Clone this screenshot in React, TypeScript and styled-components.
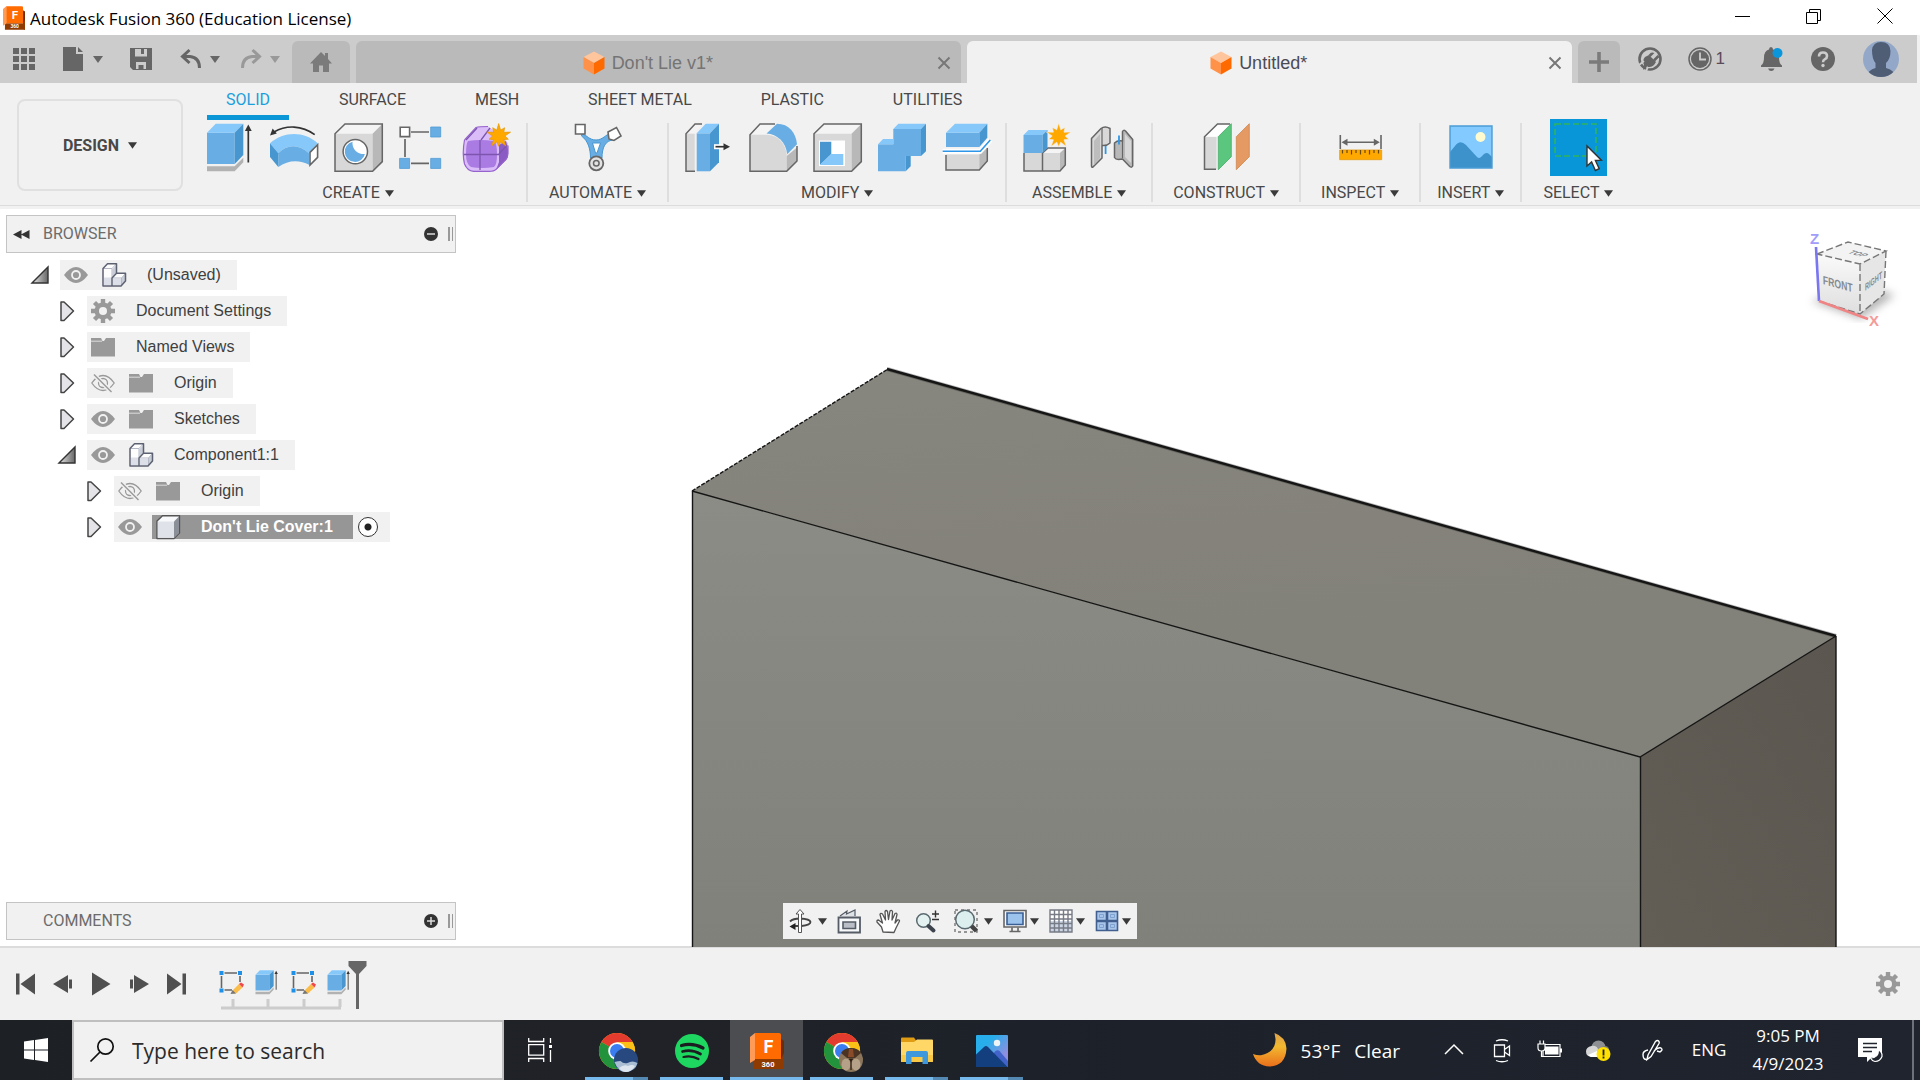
import React from "react";
import styled, { createGlobalStyle, css } from "styled-components";

const ui = `"Liberation Sans", Arial, sans-serif`;
const ribbonFont = `Roboto, "Liberation Sans", sans-serif`;
const system = `"Open Sans", "Noto Sans", sans-serif`;

const Global = createGlobalStyle`
  *, *::before, *::after { box-sizing: border-box; }
  body { margin: 0; overflow: hidden; background: #fff; font-family: ${ui}; }
  button { font: inherit; color: inherit; background: none; border: 0; padding: 0; margin: 0; }
  svg { display: block; overflow: visible; flex: none; }
`;

const Shell_ = styled.div`
  display: flex;
  flex-direction: column;
  height: 100vh;
`;

const Button = styled.button`
  display: flex;
  align-items: center;
  justify-content: center;
`;

/* ---------- title bar ---------- */
const TitleBar = styled.header`
  display: flex;
  align-items: center;
  height: 35px;
  padding-left: 3px;
  background: #fff;
  flex: none;
`;
const Title = styled.h1`
  flex: 1;
  margin: 2px 0 0 5px;
  font: 400 17px/24px ${system};
  color: #000;
`;
const WindowButton = styled(Button)`
  width: 71px;
  height: 32px;
  align-self: flex-start;
`;

/* ---------- application bar ---------- */
const AppBar = styled.nav`
  display: flex;
  align-items: center;
  height: 48px;
  margin-right: 3px;
  background: #ccc;
  flex: none;
`;
const AppBarShell = styled.div`
  background: #f1f1f1;
  flex: none;
`;
const QuickTools = styled.div`
  display: flex;
  gap: 26px;
  padding: 0 12px;
`;
const QuickPair = styled.div<{ $gap: number }>`
  display: flex;
  align-items: center;
  gap: ${(p) => p.$gap}px;
`;
const DocTabs = styled.div`
  display: flex;
  align-items: flex-end;
  align-self: stretch;
  flex: 1;
  gap: 6px;
`;
const tabShape = css`
  height: 42px;
  border-radius: 6px 6px 0 0;
`;
const SmallTab = styled(Button)<{ $w: number }>`
  ${tabShape}
  width: ${(p) => p.$w}px;
  background: #bababa;
  flex: none;
`;
const DocTab = styled.div<{ $active?: boolean }>`
  ${tabShape}
  display: flex;
  align-items: center;
  flex: 1;
  padding: 2px 6px 0;
  background: ${(p) => (p.$active ? "#f1f1f1" : "#bababa")};
  color: ${(p) => (p.$active ? "#4b4b55" : "#747474")};
`;
const DocName = styled(Button)`
  flex: 1;
  gap: 6px;
  font-size: 18px;
  line-height: 24px;
`;
const CloseButton = styled(Button)`
  width: 22px;
  height: 22px;
`;
const Account = styled.div`
  display: flex;
  align-items: center;
  gap: 26px;
  padding: 0 18px;
`;
const Profile = styled(Button)`
  margin-left: 2px;
`;
const JobStatus = styled(Button)`
  gap: 4px;
  font-size: 17px;
  color: #5a4a5a;
`;

/* ---------- ribbon ---------- */
const Ribbon = styled.section`
  display: flex;
  gap: 5px;
  height: 126px;
  padding-left: 17px;
  background: linear-gradient(#f1f1f1 122px, #dcdcdc 122px, #dcdcdc 123px, #f1f1f1 123px);
  color: #484848;
  font-family: ${ribbonFont};
  font-size: 16px;
  flex: none;
`;
const Workspace = styled(Button)`
  gap: 9px;
  width: 166px;
  height: 92px;
  margin-top: 16px;
  border: 2px solid #e0e0e0;
  border-radius: 8px;
  font-weight: 700;
`;
const RibbonMain = styled.div`
  flex: 1;
`;
const RibbonTabs = styled.div`
  display: flex;
  gap: 31px;
  padding-left: 19px;
`;
const RibbonTab = styled(Button)<{ $active?: boolean }>`
  height: 37px;
  padding: 0 19px;
  border-bottom: 5px solid ${(p) => (p.$active ? "#0b96d8" : "transparent")};
  color: ${(p) => (p.$active ? "#1b9edc" : "#484848")};
`;
const Groups = styled.div`
  display: flex;
  height: 79px;
  margin-top: 3px;
  padding-left: 2px;
`;
const Group = styled.div<{ $pad: number }>`
  display: flex;
  flex-direction: column;
  align-items: center;
  justify-content: space-between;
  padding: 0 ${(p) => p.$pad}px;
  border-right: 2px solid #dedede;
  &:last-child { border-right: 0; }
`;
const ToolRow = styled.div`
  display: flex;
  gap: 16px;
`;
const Tool = styled(Button)<{ $on?: boolean }>`
  width: 48px;
  height: 48px;
  ${(p) => p.$on && css`
    width: 57px;
    height: 57px;
    margin: -4px 0;
    background: #0996d8;
  `}
`;
const GroupLabel = styled(Button)`
  gap: 5px;
  line-height: 18px;
`;

/* ---------- canvas ---------- */
const Canvas = styled.main`
  position: relative;
  display: flex;
  flex-direction: column;
  justify-content: space-between;
  flex: 1;
  min-height: 0;
  padding: 6px;
  background: #fff;
`;
const Model = styled.svg`
  position: absolute;
  inset: 0;
  width: 100%;
  height: 100%;
`;
const CubeOverlay = styled.svg`
  position: absolute;
  top: 20px;
  right: 19px;
`;
const NavBar = styled.div`
  position: absolute;
  left: 50%;
  bottom: 7px;
  transform: translateX(-50%);
  display: flex;
  align-items: center;
  gap: 10px;
  height: 36px;
  padding: 0 6px 0 5px;
  background: #f1f1f1;
`;
const NavPair = styled.div<{ $gap?: number }>`
  display: flex;
  align-items: center;
  gap: ${(p) => p.$gap ?? 0}px;
  padding-right: ${(p) => (p.$gap ? 0 : 5)}px;
`;
const Side = styled.aside`
  position: relative;
  width: 450px;
`;
const Panel = styled.div`
  display: flex;
  align-items: center;
  height: 38px;
  padding: 0 2px 0 6px;
  border: 1px solid #c4c4c4;
  background: #f1f1f1;
`;
const PanelTitle = styled.h2`
  flex: 1;
  margin: 0 0 0 12px;
  font: 400 16px/20px ${ribbonFont};
  color: #6c6c6c;
`;
const Grip = styled.i`
  width: 5px;
  height: 14px;
  margin-left: 10px;
  border-left: 2px solid #999;
  border-right: 1px solid #999;
`;
const Tree = styled.ul`
  display: flex;
  flex-direction: column;
  gap: 6px;
  margin: 0;
  padding: 7px 0 0 24px;
  list-style: none;
`;
const TreeRow = styled.li<{ $depth: number }>`
  display: flex;
  align-items: center;
  height: 30px;
  padding-left: ${(p) => p.$depth * 27}px;
`;
const Expander = styled(Button)`
  width: 20px;
  height: 24px;
  margin-right: 10px;
`;
const Item = styled.div`
  display: flex;
  align-items: center;
  height: 30px;
  padding: 0 16px 0 4px;
  background: #f1f1f1;
`;
const Body = styled.div<{ $selected?: boolean }>`
  display: flex;
  align-items: center;
  gap: 21px;
  height: 24px;
  margin-left: 10px;
  padding-left: 4px;
  font-size: 16px;
  line-height: 26px;
  color: #404040;
  &:first-child { margin-left: 0; padding-left: 0; }
  ${(p) => p.$selected && css`
    padding-right: 20px;
    background: #969696;
    color: #fff;
    font-weight: 700;
  `}
`;
const ActiveRadio = styled.input`
  appearance: none;
  width: 20px;
  height: 20px;
  margin: 0 -4px 0 5px;
  border: 1px solid #333;
  border-radius: 50%;
  background: radial-gradient(circle, #222 3px, #fff 4px);
`;

/* ---------- timeline ---------- */
const Timeline = styled.section`
  display: flex;
  align-items: center;
  height: 74px;
  padding: 0 20px 0 13px;
  border-top: 2px solid #dcdcdc;
  background: #f1f1f1;
  flex: none;
`;
const Playback = styled.div`
  display: flex;
  gap: 14px;
  margin-right: 30px;
`;
const Track = styled.div`
  position: relative;
  display: flex;
  gap: 12px;
  flex: 1;
  padding-bottom: 4px;
`;
const Rail = styled.svg`
  position: absolute;
  left: 0;
  top: -9px;
`;

/* ---------- taskbar ---------- */
const Taskbar = styled.footer`
  display: flex;
  height: 60px;
  background: linear-gradient(90deg, #1d2126, #202227 35%, #1c212a 60%, #1f242e);
  color: #fff;
  font: 400 17px/28px ${system};
  flex: none;
`;
const TaskButton = styled(Button)<{ $w: number }>`
  width: ${(p) => p.$w}px;
  flex: none;
`;
const Search = styled.label`
  display: flex;
  align-items: center;
  gap: 18px;
  width: 432px;
  padding: 0 16px;
  border: 2px solid #bfbfbf;
  background: #f1f1f1;
`;
const SearchInput = styled.input`
  flex: 1;
  min-width: 0;
  padding: 2px 0 0;
  border: 0;
  background: none;
  font: 400 21px/28px ${system};
  &::placeholder { color: #2b2b2b; opacity: 1; }
`;
const Apps = styled.div`
  display: flex;
  flex: 1;
  gap: 2px;
  padding-left: 4px;
`;
const AppButton = styled(Button)<{ $state: "single" | "multi" | "focus" }>`
  width: 73px;
  padding-top: 4px;
  border-bottom: 3px solid;
  border-image: ${(p) =>
    p.$state === "focus"
      ? "linear-gradient(#76b9ed, #76b9ed) 1"
      : p.$state === "single"
      ? "linear-gradient(90deg, transparent 6px, #76b9ed 6px, #76b9ed 67px, transparent 67px) 1"
      : "linear-gradient(90deg, transparent 6px, #76b9ed 6px, #76b9ed 53px, #5489b4 53px, #5489b4 67px, transparent 67px) 1"};
  background: ${(p) => (p.$state === "focus" ? "#4b4d51" : "none")};
`;
const Weather = styled(Button)`
  gap: 14px;
  padding-right: 30px;
  font-size: 19px;
`;
const Conditions = styled.span`
  display: flex;
  gap: 14px;
  padding-top: 2px;
`;
const Clock = styled(Button)`
  flex-direction: column;
  width: 104px;
`;
const ShowDesktop = styled(Button)`
  width: 8px;
  margin-left: 12px;
  border-left: 2px solid #6d727a;
`;

/* ---------- shared drawings ---------- */
type SvgProps = { size?: number; box?: number; children?: React.ReactNode };
const Svg = ({ size = 24, box = 24, children }: SvgProps) => (
  <svg width={size} height={size} viewBox={`0 0 ${box} ${box}`} fill="none" aria-hidden="true">{children}</svg>
);
const Caret = ({ color = "#3a3a3a", w = 10 }: { color?: string; w?: number }) => (
  <svg width={w} height="7" viewBox="0 0 10 7" aria-hidden="true"><path d="M0 0h10L5 7z" fill={color} /></svg>
);
const CaretButton = ({ label, color, w }: { label: string; color?: string; w?: number }) => (
  <Button aria-label={label}><Caret color={color} w={w} /></Button>
);

const T = { f: "#68aee4", t: "#87c8fa", r: "#4896d0", g: "#d8d8d8", d: "#b8b8b8", l: "#f4f4f4", s: "#666" };
const starPath = (cx: number, cy: number, r: number) =>
  Array.from({ length: 20 }, (_, i) => {
    const a = (i * Math.PI) / 10 - Math.PI / 2;
    const k = i % 2 ? r * 0.5 : r * (i % 4 ? 0.82 : 1);
    return `${i ? "L" : "M"}${(cx + Math.cos(a) * k).toFixed(1)} ${(cy + Math.sin(a) * k).toFixed(1)}`;
  }).join("") + "z";

const Extrude = () => (
  <>
    <path d="M1 43.3h27.7l8.6-8.6v4.6L28.7 48.3H1z" fill="#b2b2b2" />
    <path d="M1 9.7h27.7V41H1z" fill={T.f} />
    <path d="M1 9.7l8.7-9h27.6l-8.6 9z" fill={T.t} />
    <path d="M28.7 9.7l8.6-9V32l-8.6 9z" fill={T.r} />
    <path d="M42.3 7v32.5" stroke="#333" strokeWidth="1.7" />
    <path d="M42.3 1.5l3.4 6.5h-6.8z" fill="#333" />
  </>
);
const Revolve = () => (
  <>
    <path d="M44.7 11.7C32 2 16 2 4 9" stroke="#333" strokeWidth="1.6" />
    <path d="M0 12.5l2.6-7 4.2 5z" fill="#333" />
    <path d="M0 20.3C14 8 34 8 47.7 20.3l-8.7 10C29 21 17 21 8.3 30.3z" fill={T.t} />
    <path d="M8.3 30.3C17 21 29 21 39 30.3v11.5c-9-5-21-5-30.7 2.2z" fill={T.f} />
    <path d="M0 20.3l8.3 10V44L0 34z" fill={T.r} />
    <path d="M40 29.4l7.6-7.6v12.6L40 42z" fill="#fff" stroke={T.s} strokeWidth="1.6" />
  </>
);
const Box = () => (
  <>
    <path d="M1 10.7L11 1h37.3L38.6 10.7z" fill={T.l} />
    <path d="M1 10.7h37.6v37.6H1z" fill={T.g} />
    <path d="M38.6 10.7L48.3 1v37.6l-9.7 9.7z" fill={T.d} />
    <path d="M1 10.7L11 1h37.3v37.6l-9.7 9.7H1z" stroke={T.s} strokeWidth="1.5" />
  </>
);
const Hole = () => (
  <>
    <Box />
    <circle cx="21.3" cy="28.6" r="12.2" fill="#fff" stroke={T.s} strokeWidth="1.5" />
    <path d="M18.5 18.8a11 11 0 0 0 12.4 12.2a10.2 10.2 0 1 1-12.4-12.2z" fill={T.f} />
  </>
);
const Pattern = () => (
  <>
    <path d="M13 9h18M13 40.3h18M7 16v18" stroke={T.s} strokeWidth="1.7" />
    <path d="M2.2 4.2h9.4v9.4H2.2z" fill="#fff" stroke={T.s} strokeWidth="1.6" />
    <path d="M32.7 4h10v10h-10zM1.6 35.4h10v10h-10zM32.7 35.4h10v10h-10z" fill={T.f} stroke="#4f9bd3" strokeWidth=".8" />
  </>
);
const Form = () => (
  <>
    <path d="M3 17L14 4.5q3-1 12-1l14 9 6 8v10q0 4-3 7l-9 9q-2 2-7 2H12q-7 0-10-8-2-13 1-24z" fill="#d9bcf8" />
    <path d="M37 22l7-4 2 8v6q0 4-3 6l-9 9 3-8z" fill="#8c5cc4" />
    <path d="M6 18q12-2 26 0 3 2 3 13t-3 13q-12 2-23 0-5-3-5-13t2-13z" fill="#aa7be2" />
    <path d="M4 17L15 5M18 17v30M2 31.5h35M19 17l9-12M37 31l8-9" stroke="#7d55ae" strokeWidth="1.3" />
    <path d="M2.5 17L14 4.5q3-1 12-1M2.5 17q-2.5 13 0 24 3 7 9 7.400H27q5 0 7-2l9-9q3-3 3-7v-8" stroke="#9663cd" strokeWidth="1.2" />
    <path d={starPath(36.7, 13, 12.5)} fill="#ffa800" stroke="#e39400" strokeWidth=".6" />
  </>
);
const Automate = () => (
  <>
    <path d="M8 11c5 1 7 6 14 6s10-6 14-6l4 6c-9 0-12 8-12 18H16.500c0-8-2-17-9-22z" fill={T.f} stroke={T.r} strokeWidth="1" />
    <path d="M18.500 20h8l-3.500 10h-1.500z" fill="#fff" stroke={T.r} strokeWidth="1" />
    <path d="M1.5 1.500h9.500v9.500H1.500z" fill="#fff" stroke={T.s} strokeWidth="1.6" />
    <path d="M34 9l8.500-4.500L47 13l-7 4.500-5-1.500z" fill="#fff" stroke={T.s} strokeWidth="1.6" />
    <circle cx="22.3" cy="40.3" r="7" fill="#e2e2e2" stroke={T.s} strokeWidth="1.8" />
    <circle cx="22.3" cy="40.3" r="2.8" stroke={T.s} strokeWidth="1.5" />
  </>
);
const PressPull = () => (
  <>
    <path d="M1 10.7L10 1h7l-7 9.7z" fill={T.l} />
    <path d="M1 10.7h8.7v37.6H1z" fill={T.g} />
    <path d="M17 1h-7L1 10.7v37.6h9" stroke={T.s} strokeWidth="1.5" />
    <path d="M11.7 10.3H25v38H11.700z" fill={T.f} />
    <path d="M11.7 10.3l9-9.6H34l-9 9.6z" fill={T.t} />
    <path d="M25 10.3L34 .7v38.6l-9 9z" fill={T.r} />
    <path d="M29 23.7h13" stroke="#fff" strokeWidth="5" />
    <path d="M30.5 23.7H40" stroke="#333" strokeWidth="1.7" />
    <path d="M45 23.7l-6.5-3.5v7z" fill="#333" />
  </>
);
const Fillet = () => (
  <>
    <path d="M1 11.7L11 1h15l-8 10.7z" fill={T.l} />
    <path d="M1 11.7h17.300c12 1 18 9 19.400 20v16.600H1z" fill={T.g} />
    <path d="M37.7 33l10.300-8.500v13.500l-10.300 10.300z" fill={T.d} />
    <path d="M26 1H11L1 11.700v36.600h36.700L48 38V23" stroke={T.s} strokeWidth="1.5" />
    <path d="M17.500 10.500L28 .7c12 0 19 9 20 20.500l-9.800 10c-1-12-10-20-20.700-20.700z" fill={T.f} />
  </>
);
const Shell = () => (
  <>
    <Box />
    <path d="M6 17.500h26v25.500H6z" fill="#fff" />
    <path d="M7 18.700h11.300V31L7 42z" fill={T.r} />
    <path d="M7 42l11.300-11h12V42z" fill={T.t} />
  </>
);
const Combine = () => (
  <>
    <path d="M1 21.300h15.300V6H44v27H28.700v15.300H1z" fill={T.f} />
    <path d="M16.300 6l5-5.300H49L44 6zM1 21.300L6 16h10.300v5.300z" fill={T.t} />
    <path d="M44 6l5-5.300v27.600L44 33zM28.700 33h5v10.300l-5 5z" fill={T.r} />
  </>
);
const Split = () => (
  <>
    <path d="M5 31.500h33.300V47H5z" fill={T.g} />
    <path d="M38.300 31.500l8-7V38l-8 9z" fill={T.d} />
    <path d="M5 32v15h33.300l8-9V25" stroke={T.s} strokeWidth="1.5" />
    <path d="M5 9.700h33.300V24H5z" fill={T.f} />
    <path d="M5 9.700l9-9h32.300l-8 9z" fill={T.t} />
    <path d="M38.300 9.700l8-9v14l-8 9.300z" fill={T.r} />
    <path d="M1.700 28.300h37.600l10-11.300" stroke="#fff" strokeWidth="5" />
    <path d="M1.700 28.300h37.600l10-11.300" stroke="#2e96e8" strokeWidth="1.6" />
  </>
);
const NewComponent = () => (
  <>
    <path d="M1 30h36v18H1z" fill={T.g} />
    <path d="M20 30l5-5h17.300L37 30z" fill={T.l} />
    <path d="M37 30l5.300-5v17.300L37 48z" fill={T.d} />
    <path d="M1 30v18h36l5.300-6V25H25l-5.500 5v18" stroke={T.s} strokeWidth="1.5" />
    <path d="M.5 12h19v18h-19z" fill={T.f} />
    <path d="M.5 12l5-5h19l-5 5z" fill={T.t} />
    <path d="M19.500 12l5-5v18l-5 5z" fill={T.r} />
    <path d={starPath(35.7, 13, 13)} fill="#ffa800" stroke="#f1f1f1" strokeWidth=".6" />
  </>
);
const Joint = () => (
  <>
    <path d="M4.500 15.500l9.500-10q4-3 9 0V20q-3 3-8 2.500V35l-9 9q-1.500.7-1.500-1z" fill={T.g} stroke={T.s} strokeWidth="1.5" strokeLinejoin="round" />
    <path d="M7 18l6-7v24l-6 7z" fill="#bdbdbd" />
    <path d="M15 5v17" stroke={T.s} strokeWidth="1.2" />
    <path d="M18.600 23v8" stroke="#2e96e8" strokeWidth="1.8" />
    <path d="M35.500 8.500q1-2 3-.5l7.200 8.500V43q-1 2-3 .5l-7.200-7.500-4 .5q-3 0-4-2V20q3-3 8-2z" fill={T.d} stroke={T.s} strokeWidth="1.5" strokeLinejoin="round" />
    <path d="M38 11l6 7v22l-6-6z" fill={T.g} />
    <path d="M35.500 18v17" stroke={T.s} strokeWidth="1.2" />
    <path d="M32 12.500v9" stroke="#2e96e8" strokeWidth="1.8" />
  </>
);
const Construct = () => (
  <>
    <path d="M2.500 13.700h12v32.600h-12z" fill={T.g} />
    <path d="M2.500 13.700L15.500 1H28L15 13.700z" fill="#fff" />
    <path d="M28 1H15.500l-13 12.700v32.600H14" stroke={T.s} strokeWidth="1.5" />
    <path d="M16.300 13.700l13-13v33l-13 13z" fill="#5bc67e" stroke="#45ad68" strokeWidth=".8" />
    <path d="M34.300 13.700l13-13v33l-13 13z" fill="#e59a63" stroke="#cf8750" strokeWidth=".8" />
  </>
);
const Inspect = () => (
  <>
    <path d="M4.300 12v14M45 12v14M8 19.300h33" stroke={T.s} strokeWidth="1.6" />
    <path d="M5.500 19.300l6-3.500v7zM43.800 19.300l-6-3.500v7z" fill={T.s} />
    <path d="M3.700 27h42v9.700h-42z" fill="#ffa800" stroke="#e39a10" strokeWidth=".8" />
    <path d="M6.500 27v3.500M11 27v3M15.500 27v4.500M20 27v3M24.500 27v4.500M29 27v3M33.500 27v4.500M38 27v3M42.500 27v3.500" stroke="#6a4a10" strokeWidth="1.2" />
  </>
);
const Insert = () => (
  <>
    <path d="M3 3h42v42H3z" fill="#82caff" />
    <path d="M3 29l5-6q5-7 11-1l11 12q2 2 4 0l3-3q3-2 5 0l3 3v11H3z" fill="#3e92cc" />
    <path d="M3 3h42v42H3z" stroke="#4b9cd5" strokeWidth="1.4" />
    <circle cx="33.5" cy="14" r="5" fill="#fffbcf" />
  </>
);
const Select = () => (
  <>
    <path d="M5 5h41v32H5z" stroke="#2fb45a" strokeWidth="1.6" strokeDasharray="6 3" />
    <path d="M37 27v20l4.600-4 3.800 8.500 3.800-1.800-3.800-8.200 6-.3z" fill="#fff" stroke="#333" strokeWidth="1.4" />
  </>
);

const FusionLogo = ({ w, h }: { w: number; h: number }) => (
  <svg width={w} height={h} viewBox="0 0 34 36" aria-hidden="true">
    <path d="M31 6l3 2v28l-3-1z" fill="#6e2c00" />
    <path d="M3 26h28l3-6v16H3z" fill="#8f3a00" />
    <path d="M5 0L0 4v26l5-3z" fill="#ff9a57" />
    <path d="M5 0h24q2 0 2 2v24H5z" fill="#ff6b00" />
    <text x="18.5" y="20" textAnchor="middle" fontFamily="Roboto, sans-serif" fontWeight="700" fontSize="18" fill="#fff">F</text>
    <text x="18" y="34" textAnchor="middle" fontFamily="Roboto, sans-serif" fontWeight="700" fontSize="7.5" fill="#fff">360</text>
  </svg>
);
const OrangeCube = () => (
  <Svg>
    <path d="M12 .5L22.500 6 12 12 1.500 6z" fill="#ffc59c" />
    <path d="M1.500 6L12 12v11.500L1.500 17.500z" fill="#ff9248" />
    <path d="M22.500 6L12 12v11.500l10.500-6z" fill="#ff6a00" />
  </Svg>
);
const Cross = () => (
  <Svg size={16} box={16}><path d="M2.500 2.500l11 11M13.500 2.500l-11 11" stroke="#777" strokeWidth="2" /></Svg>
);
const Gear = ({ fill }: { fill: string }) => (
  <Svg>
    <path d="M12 0v24M0 12h24M3.500 3.500l17 17M20.500 3.500l-17 17" stroke={fill} strokeWidth="4.4" />
    <circle cx="12" cy="12" r="8.5" fill={fill} />
    <circle cx="12" cy="12" r="4" fill="#f1f1f1" />
  </Svg>
);
const Eye = ({ off }: { off?: boolean }) => (
  <Svg>
    {off ? (
      <>
        <path d="M.8 12Q6 4.500 12 4.500T23.200 12Q18 19.500 12 19.500T.8 12z" stroke="#999" strokeWidth="1.3" />
        <circle cx="12" cy="12" r="4.5" stroke="#999" strokeWidth="1.3" />
        <path d="M3 3.500L20.500 21" stroke="#f1f1f1" strokeWidth="4" />
        <path d="M3 3.500L20.500 21" stroke="#999" strokeWidth="1.4" />
      </>
    ) : (
      <>
        <path d="M0 12Q6 4 12 4t12 8q-6 8-12 8T0 12z" fill="#999" />
        <circle cx="12" cy="12" r="4" stroke="#f1f1f1" strokeWidth="1.8" />
      </>
    )}
  </Svg>
);
const Folder = () => (
  <Svg><path d="M0 3h10l1.500 3H13l2-3h9v18.500H0z" fill="#999" /><path d="M0 6.200h11" stroke="#ddd" strokeWidth="1" /></Svg>
);
const Component = () => (
  <Svg>
    <path d="M1 5.500L5.500.8H14.500V10h5L24 10.500V18l-4.500 5H1z" fill="#fdfdfe" />
    <path d="M2 14.500h7.500V22.300H2zM11 16h8v6.300h-8z" fill="#dcdfe8" />
    <path d="M10.500 6l4-4v7.500l-4 4zM19.500 15l4-4v7l-4 4z" fill="#c9cdd8" />
    <path d="M1 5.500h9v9M10 5.500L14.500.8M10.500 15h9v8M19.500 15l4-4.500" stroke="#b5b9c6" />
    <path d="M1 5.500L5.500.8H14.500V10.300H23.500V18l-4.500 5H1zM10 23v-8l4.500-4.700" stroke="#5d6272" strokeWidth="1.5" strokeLinejoin="round" />
  </Svg>
);
const BodyIcon = () => (
  <Svg>
    <path d="M1 6L6.500.8H23.500V18L18 23.500H1z" fill="#f8f9fb" stroke="#555" strokeWidth="1.4" strokeLinejoin="round" />
    <path d="M1.800 6.500H18v16.300H1.800z" fill="#dfe2e8" />
    <path d="M18 6.500l5-5V18l-5 5z" fill="#8b8f97" />
  </Svg>
);

/* ---------- data ---------- */
const groups: { label: string; pad: number; tools: { name: string; icon: React.ReactNode; on?: boolean }[] }[] = [
  { label: "CREATE", pad: 16, tools: [
    { name: "Extrude", icon: <Extrude /> }, { name: "Revolve", icon: <Revolve /> }, { name: "Hole", icon: <Hole /> },
    { name: "Rectangular pattern", icon: <Pattern /> }, { name: "Create form", icon: <Form /> }] },
  { label: "AUTOMATE", pad: 21, tools: [{ name: "Automated modeling", icon: <Automate /> }] },
  { label: "MODIFY", pad: 16, tools: [
    { name: "Press pull", icon: <PressPull /> }, { name: "Fillet", icon: <Fillet /> }, { name: "Shell", icon: <Shell /> },
    { name: "Combine", icon: <Combine /> }, { name: "Split body", icon: <Split /> }] },
  { label: "ASSEMBLE", pad: 16, tools: [{ name: "New component", icon: <NewComponent /> }, { name: "Joint", icon: <Joint /> }] },
  { label: "CONSTRUCT", pad: 20, tools: [{ name: "Offset plane", icon: <Construct /> }] },
  { label: "INSPECT", pad: 20, tools: [{ name: "Measure", icon: <Inspect /> }] },
  { label: "INSERT", pad: 16, tools: [{ name: "Canvas", icon: <Insert /> }] },
  { label: "SELECT", pad: 21, tools: [{ name: "Select", icon: <Select />, on: true }] },
];
const ribbonTabs = ["SOLID", "SURFACE", "MESH", "SHEET METAL", "PLASTIC", "UTILITIES"];

type Node = { name: string; depth: number; open?: boolean; eye?: "on" | "off"; kind: "component" | "gear" | "folder" | "body"; selected?: boolean };
const nodes: Node[] = [
  { name: "(Unsaved)", depth: 0, open: true, eye: "on", kind: "component" },
  { name: "Document Settings", depth: 1, kind: "gear" },
  { name: "Named Views", depth: 1, kind: "folder" },
  { name: "Origin", depth: 1, eye: "off", kind: "folder" },
  { name: "Sketches", depth: 1, eye: "on", kind: "folder" },
  { name: "Component1:1", depth: 1, open: true, eye: "on", kind: "component" },
  { name: "Origin", depth: 2, eye: "off", kind: "folder" },
  { name: "Don't Lie Cover:1", depth: 2, eye: "on", kind: "body", selected: true },
];
const kindIcon = { component: <Component />, gear: <Gear fill="#999" />, folder: <Folder />, body: <BodyIcon /> };

const playback: [string, React.ReactNode][] = [
  ["Go to start", <path key="p" d="M3 1.500h3.500v21H3zM22 1.500v21L7.500 12z" />],
  ["Step back", <path key="p" d="M2 12L17 3v18zM18 7.500h3v9h-3z" />],
  ["Play", <path key="p" d="M3 .5v23L21.500 12z" />],
  ["Step forward", <path key="p" d="M3 7.500h3v9H3zM7 3v18l15-9z" />],
  ["Go to end", <path key="p" d="M2 1.500v21L16.500 12zM17.500 1.500H21v21h-3.500z" />],
];
const SketchFeature = () => (
  <Svg>
    <path d="M5.500 3h12.500M5.500 20h7.500M2.500 6v12M21 6v6" stroke="#666" strokeWidth="1.6" />
    <path d="M.5 1h4v4h-4zM19 1h4v4h-4zM.5 18.500h4v4h-4z" fill="#1e90e8" />
    <path d="M13.500 20.500l6.500-6.500 3.500 3.500-6.500 6h-3z" fill="#fbbd4a" />
    <path d="M20 14l2-1.500 3 2-1.500 3z" fill="#f0474b" />
    <path d="M11.500 24l2-4 3.500 3.500z" fill="#777" />
  </Svg>
);
const ExtrudeFeature = () => <Svg size={24} box={48}><Extrude /></Svg>;

const navIcon: Record<string, React.ReactNode> = {
  orbit: (
    <>
      <path d="M2 12.500Q5 9.500 12 9.500q10 .5 10.500 3.500 0 3-9 4H7" stroke="#444" strokeWidth="1.8" />
      <path d="M1.500 17.500l6-3.500v7z" fill="#222" />
      <path d="M10.500 5v18.500h3V5H16L12 .5 8 5z" fill="#fff" stroke="#555" strokeWidth="1" />
    </>
  ),
  look: (
    <>
      <path d="M1.500 8.500h21.500v15H1.500z" fill="#f7f8fa" stroke="#555c66" strokeWidth="1.8" />
      <path d="M6 13h12.500v6.500H6z" fill="#b9bec7" stroke="#555c66" strokeWidth="1.6" />
      <path d="M3 7l7-5-.5 3L18 1v6" fill="#dfe2e6" stroke="#555c66" strokeWidth="1.2" />
    </>
  ),
  pan: <path d="M7 23l-1.500-5L1 13q-.5-2 1.500-2l4 3L4 5.500Q4.500 3.500 6.500 5L9.500 11 9 2.500q1-2 2.500 0l1 8 1.500-8.500q1.500-1.500 2.500.5L16 11l3-6.500q2-1 2 1L19 14l2.500-3q2-.5 2 1L20 19l-2 4.500z" fill="#fff" stroke="#555" strokeWidth="1.3" strokeLinejoin="round" />,
  zoom: (
    <>
      <circle cx="8.5" cy="11.5" r="6.8" fill="#e3f1f0" stroke="#5a6a70" strokeWidth="1.5" />
      <path d="M13.500 17l5 4.500" stroke="#3d444d" strokeWidth="4" strokeLinecap="round" />
      <path d="M17 5h7M20.500 1.500v7M17 10.500h7" stroke="#333" strokeWidth="1.4" />
    </>
  ),
  fit: (
    <>
      <path d="M1 1h22v22H1z" stroke="#777" strokeWidth="1.4" strokeDasharray="3 3" />
      <circle cx="11" cy="10.5" r="9.3" fill="#dceeed" stroke="#5a6a70" strokeWidth="1.5" />
      <path d="M17.500 17l5 5" stroke="#444" strokeWidth="4.5" />
    </>
  ),
  display: (
    <>
      <path d="M1 1.500h22V18H1z" fill="#f7f7f7" stroke="#666" strokeWidth="1.6" />
      <path d="M4 4h16v11.500H4z" fill="#9cc3ec" stroke="#3a5f94" strokeWidth="1.6" />
      <path d="M9 18.500v4H6.500M15 18.500v4h2.500H7" stroke="#666" strokeWidth="1.6" />
    </>
  ),
  grid: (
    <>
      <path d="M1 1h22v22H1z" fill="#fff" />
      <path d="M1 12h22v11H1z" fill="#ccd5e4" />
      <path d="M1 1h22v22H1zM5.500 1v22M10 1v22M14.500 1v22M19 1v22M1 5.500h22M1 10h22M1 14.500h22M1 19h22" stroke="#777b85" strokeWidth="1.4" />
    </>
  ),
  views: (
    <>
      <path d="M1.500 2.500h10v9h-10zM12.500 2.500h10v9h-10zM1.500 12.500h10v9h-10zM12.500 12.500h10v9h-10z" fill="#a9c6ea" stroke="#41608f" strokeWidth="1.6" />
      <path d="M4.500 5.500h4v3h-4zM15.500 5.500h4v3h-4zM4.500 15.500h4v3h-4zM15.500 15.500h4v3h-4z" stroke="#7fa2d0" />
    </>
  ),
};
const navItems: { id: string; label: string; gap?: number }[] = [
  { id: "orbit", label: "Orbit", gap: 6 },
  { id: "look", label: "Look at" },
  { id: "pan", label: "Pan" },
  { id: "zoom", label: "Zoom" },
  { id: "fit", label: "Fit", gap: 6 },
  { id: "display", label: "Display settings", gap: 3 },
  { id: "grid", label: "Grid and snaps", gap: 3 },
  { id: "views", label: "Viewports", gap: 3 },
];

const Chrome = ({ badge }: { badge: React.ReactNode }) => (
  <svg width="36" height="36" viewBox="0 0 36 36" aria-hidden="true">
    <circle cx="18" cy="18" r="18" fill="#fbc116" />
    <path d="M18 18L2.400 9A18 18 0 0 1 33.600 9z" fill="#e33b2e" />
    <path d="M2.400 9A18 18 0 0 0 18 36l7.500-13.500L18 18z" fill="#23923d" />
    <path d="M18 9h15.600A18 18 0 0 1 18 36l8-13.500z" fill="#fbc116" />
    <circle cx="18" cy="18" r="8.8" fill="#fff" />
    <circle cx="18" cy="18" r="7" fill="#3a7df0" />
    {badge}
  </svg>
);
const CloudBadge = (
  <g>
    <circle cx="27" cy="27" r="12" fill="#27497f" />
    <path d="M15.500 29q4-1 6-1 3 3 7 2 5-3 10 0-2 8-11.500 9-8 0-11.500-10z" fill="#a9bdd3" />
    <path d="M20 35q5-4 9-2 4-2 7 0-4 6-9 6-4 0-7-4z" fill="#dde6ee" />
  </g>
);
const PetBadge = (
  <g>
    <circle cx="27" cy="27" r="12" fill="#8b765c" />
    <path d="M17 20q3-5 10-5t10 5l-6 5h-8z" fill="#4a3322" />
    <path d="M25 16h4l1 8h-6z" fill="#8a4b29" />
    <ellipse cx="22" cy="31.5" rx="4.5" ry="6" fill="#b5a187" />
    <ellipse cx="32" cy="31.5" rx="4.5" ry="6" fill="#b5a187" />
    <path d="M24.500 25.500h5L27 29z" fill="#2c1c12" />
    <path d="M27 28v9" stroke="#2c1c12" strokeWidth="1.2" />
  </g>
);

const taskApps: { name: string; state: "single" | "multi" | "focus"; icon: React.ReactNode }[] = [
  { name: "Google Chrome", state: "multi", icon: <Chrome badge={CloudBadge} /> },
  { name: "Spotify", state: "single", icon: (
    <Svg size={34} box={34}>
      <circle cx="17" cy="17" r="17" fill="#1ed760" />
      <path d="M6.500 11.500q11-3 21.500 2.500" stroke="#1b1d20" strokeWidth="3.2" strokeLinecap="round" />
      <path d="M7.500 17.500q9.500-2.500 18 2.500" stroke="#1b1d20" strokeWidth="2.7" strokeLinecap="round" />
      <path d="M8.500 23q8-2 15 2" stroke="#1b1d20" strokeWidth="2.2" strokeLinecap="round" />
    </Svg>) },
  { name: "Fusion 360", state: "focus", icon: <FusionLogo w={34} h={36} /> },
  { name: "Google Chrome, second profile", state: "single", icon: <Chrome badge={PetBadge} /> },
  { name: "File Explorer", state: "multi", icon: (
    <Svg size={32} box={32}>
      <path d="M0 3.500q0-1 1-1h12l2 3v3H0z" fill="#e09c12" />
      <path d="M0 7h13l3-2.500h15q1 0 1 1V26q0 1-1 1H1q-1 0-1-1z" fill="#ffd766" />
      <path d="M0 20h32v6q0 1-1 1H1q-1 0-1-1z" fill="#f9c945" />
      <path d="M5 29V18q0-2 2-2h18q2 0 2 2v11h-5.500v-7h-11v7z" fill="#3f98dc" />
    </Svg>) },
  { name: "Photos", state: "multi", icon: (
    <Svg size={32} box={32}>
      <defs><linearGradient id="sky" x1="0" y1="0" x2="1" y2="1"><stop offset=".3" stopColor="#28aeea" /><stop offset=".75" stopColor="#8d8fe0" /></linearGradient></defs>
      <rect width="32" height="32" rx="1" fill="url(#sky)" />
      <path d="M15 21l4.500-5q2-1.500 4 0L32 26v6H20z" fill="#4263c9" />
      <path d="M0 19.500L8 12q2-1.800 4 0l19.500 20H0z" fill="#143f7e" />
      <circle cx="21" cy="8" r="3.2" fill="#eef3f5" />
    </Svg>) },
];

/* ---------- page ---------- */
const DocumentTab = ({ name, active }: { name: string; active?: boolean }) => (
  <DocTab $active={active}>
    <DocName><OrangeCube />{name}</DocName>
    <CloseButton aria-label={`Close ${name}`}><Cross /></CloseButton>
  </DocTab>
);

const ViewCube = () => (
  <CubeOverlay width="96" height="106" viewBox="1806 230 96 106" fill="none">
    <defs>
      <filter id="soft"><feGaussianBlur stdDeviation="4" /></filter>
      <linearGradient id="cubeFront" x1="0" y1="0" x2="0" y2="1"><stop stopColor="#fafafa" /><stop offset="1" stopColor="#dedede" /></linearGradient>
    </defs>
    <path d="M1812 302l50 18 34-24-30-10z" fill="#999" filter="url(#soft)" opacity=".7" />
    <path d="M1818 255l31-12 38 9-26 13z" fill="#f3f3f3" />
    <path d="M1818 255l43 10v50l-41-13z" fill="url(#cubeFront)" />
    <path d="M1861 265l26-13-2 43-24 20z" fill="#e6e6e6" />
    <path d="M1818 255l31-12 38 9-26 13zM1861 265v50M1887 252l-2 43-24 20-41-13" stroke="#777" strokeWidth="1.4" strokeDasharray="7 3" />
    <path d="M1817 248l3 54" stroke="#7a76f0" strokeWidth="2.6" />
    <path d="M1820 302l49 18" stroke="#f08484" strokeWidth="2.6" />
    <g fontFamily="Liberation Sans, sans-serif" fontWeight="700">
      <text x="1811" y="245" fontSize="15" fill="#a19df8">Z</text>
      <text x="1870" y="327" fontSize="15" fill="#f59a9a">X</text>
      <text transform="matrix(.72 .2 .03 1 1824 285)" fontSize="12" fill="#858a90">FRONT</text>
      <text transform="matrix(.55 -.42 0 1 1866 292)" fontSize="10" fill="#858a90">RIGHT</text>
      <text transform="matrix(.8 .2 -.9 .4 1848 254)" fontSize="10" fill="#858a90">TOP</text>
    </g>
  </CubeOverlay>
);

export default function App() {
  return (
    <Shell_>
      <Global />
      <TitleBar>
        <FusionLogo w={22} h={24} />
        <Title>Autodesk Fusion 360 (Education License)</Title>
        <WindowButton aria-label="Minimize"><Svg size={16} box={16}><path d="M0 8.500h15" stroke="#000" /></Svg></WindowButton>
        <WindowButton aria-label="Restore"><Svg size={16} box={16}><path d="M.5 4.500h11v11H.5zM3.500 4V1.500h11v11H12" stroke="#000" /></Svg></WindowButton>
        <WindowButton aria-label="Close"><Svg size={16} box={16}><path d="M.5 .5l15 15M15.500 .5l-15 15" stroke="#000" /></Svg></WindowButton>
      </TitleBar>

      <AppBarShell>
        <AppBar>
          <QuickTools>
            <Button aria-label="Show data panel"><Svg><path d="M1 1h6v6H1zM9 1h6v6H9zM17 1h6v6h-6zM1 9h6v6H1zM9 9h6v6H9zM17 9h6v6h-6zM1 17h6v6H1zM9 17h6v6H9zM17 17h6v6h-6z" fill="#666" /></Svg></Button>
            <QuickPair $gap={7}>
              <Button aria-label="File"><Svg><path d="M1 0h13v7h7v17H1zM16 0l5 5h-5z" fill="#666" /></Svg></Button>
              <CaretButton label="File menu" color="#666" />
            </QuickPair>
            <Button aria-label="Save"><Svg><path d="M1 1h22v22H4l-3-3zM6 2v7.500h12V2h-3v5h-3V2zM7 15v7h2.500v-4h5v4H17v-7z" fill="#666" fillRule="evenodd" /></Svg></Button>
            <QuickPair $gap={19}>
              <QuickPair $gap={7}>
                <Button aria-label="Undo"><Svg><path d="M4 9.500h7q9.500 1 9.500 11.500" stroke="#666" strokeWidth="3" /><path d="M10.500 3L3.500 9.500l7 6.500" stroke="#666" strokeWidth="3" /></Svg></Button>
                <CaretButton label="Undo history" color="#666" />
              </QuickPair>
              <QuickPair $gap={7}>
                <Button aria-label="Redo"><Svg><path d="M20 9.500h-7Q3.500 10.500 3.500 21" stroke="#999" strokeWidth="3" /><path d="M13.500 3l7 6.500-7 6.500" stroke="#999" strokeWidth="3" /></Svg></Button>
                <CaretButton label="Redo history" color="#999" />
              </QuickPair>
            </QuickPair>
          </QuickTools>
          <DocTabs>
            <SmallTab $w={58} aria-label="Home"><Svg><path d="M12 2l4 4V3h3v6l4 4.500h-3V22h-6v-6.500h-4V22H4v-8.500H1z" fill="#7b7b7b" /></Svg></SmallTab>
            <DocumentTab name="Don't Lie v1*" />
            <DocumentTab name="Untitled*" active />
            <SmallTab $w={42} aria-label="New design"><Svg><path d="M12 2v20M2 12h20" stroke="#7b7b7b" strokeWidth="3.6" /></Svg></SmallTab>
          </DocTabs>
          <Account>
            <Button aria-label="Extensions">
              <Svg>
                <circle cx="12" cy="12" r="10.5" stroke="#666" strokeWidth="2.6" />
                <path d="M6 18q-2-5 1-8l4-2 7 7-2 3q-3 3-7 1.500L5 23" fill="#666" />
                <path d="M11.500 9l4-4M16 13.500l4.500-4.500" stroke="#666" strokeWidth="2.6" />
                <path d="M12.500 5q4-1 6.500 2" stroke="#ccc" strokeWidth="1.4" />
                <path d="M1 18l5-4M8 24l2-4" stroke="#ccc" strokeWidth="1.8" />
              </Svg>
            </Button>
            <JobStatus>
              <Svg><circle cx="12" cy="12" r="11" stroke="#666" strokeWidth="1.5" /><circle cx="12" cy="12" r="9" fill="#666" /><path d="M12 5.500V12.500h6" stroke="#ccc" strokeWidth="1.8" /></Svg>
              1
            </JobStatus>
          </Account>
          <Account>
            <Button aria-label="Notifications"><Svg><path d="M10 0q2 0 2 2.500 6 1.500 6 8 0 6 3 8v1.500H0v-1.500q3-2 3-8 0-6.500 5-8Q8 0 10 0zM7 21.500h6.500q-1 2.500-3.250 2.500T7 21.500z" fill="#666" /><circle cx="16.5" cy="6" r="5" fill="#0b96dc" /></Svg></Button>
            <Button aria-label="Help"><Svg><circle cx="12" cy="12" r="12" fill="#666" /><path d="M8 9.500q0-4 4-4t4 3.500q0 2.200-2 3.200t-2 3" stroke="#ccc" strokeWidth="2.6" /><circle cx="12" cy="18.5" r="1.7" fill="#ccc" /></Svg></Button>
            <Profile aria-label="Account">
              <Svg size={36} box={36}>
                <defs><clipPath id="face"><circle cx="18" cy="18" r="18" /></clipPath></defs>
                <g clipPath="url(#face)"><path d="M0 0h36v36H0z" fill="#93a8c8" /><path d="M9 9q1-8 9-8 9 0 9.500 9 0 8-4.500 12v5q8 2 10 9H3q2-7 9.500-9v-5Q9 18 9 9z" fill="#4f5d75" /></g>
              </Svg>
            </Profile>
          </Account>
        </AppBar>
      </AppBarShell>

      <Ribbon>
        <Workspace>DESIGN<Caret w={9} /></Workspace>
        <RibbonMain>
          <RibbonTabs>
            {ribbonTabs.map((t, i) => <RibbonTab key={t} $active={i === 0}>{t}</RibbonTab>)}
          </RibbonTabs>
          <Groups>
            {groups.map((g) => (
              <Group key={g.label} $pad={g.pad}>
                <ToolRow>
                  {g.tools.map((t) => (
                    <Tool key={t.name} $on={t.on} aria-label={t.name}>
                      <Svg size={t.on ? 57 : 48} box={t.on ? 57 : 48}>{t.icon}</Svg>
                    </Tool>
                  ))}
                </ToolRow>
                <GroupLabel>{g.label}<Caret w={9} /></GroupLabel>
              </Group>
            ))}
          </Groups>
        </RibbonMain>
      </Ribbon>

      <Canvas>
        <Model viewBox="0 209 1920 737" preserveAspectRatio="xMidYMax slice" aria-label="Model">
          <defs>
            <linearGradient id="top" x1="0" y1="0" x2=".2" y2="1"><stop stopColor="#87877f" /><stop offset=".5" stopColor="#84827a" /><stop offset="1" stopColor="#82827a" /></linearGradient>
            <linearGradient id="front" x1="0" y1="0" x2="0" y2="1"><stop stopColor="#8b8c85" /><stop offset="1" stopColor="#80817a" /></linearGradient>
            <linearGradient id="right" x1="1" y1="0" x2="0" y2="1"><stop stopColor="#5b564f" /><stop offset="1" stopColor="#625e56" /></linearGradient>
          </defs>
          <path d="M692 491L888 369l948 267-196 121z" fill="url(#top)" />
          <path d="M692 491l948 266v190H692z" fill="url(#front)" />
          <path d="M1640 757l196-121v311h-196z" fill="url(#right)" />
          <g fill="none" stroke="#151515">
            <path d="M692 491L888 369" strokeWidth="1.4" strokeDasharray="4 1.5" />
            <path d="M692 491l948 266 196-121" strokeWidth="1.3" />
            <path d="M692.500 491v456M1640.500 757v190M1836 636v311" strokeWidth="1.4" />
            <path d="M887 369l949 267" strokeWidth="4" opacity=".3" />
            <path d="M887 369l949 267" strokeWidth="2.4" />
          </g>
        </Model>
        <Side>
          <Panel>
            <Button aria-label="Collapse browser"><Svg size={18} box={18}><path d="M0 9.500L8.500 5v9zM8 9.500L16.500 5v9z" fill="#333" /></Svg></Button>
            <PanelTitle>BROWSER</PanelTitle>
            <Button aria-label="Minimize browser"><Svg size={14} box={14}><circle cx="7" cy="7" r="7" fill="#333" /><path d="M3 7h8" stroke="#ddd" strokeWidth="1.5" /></Svg></Button>
            <Grip />
          </Panel>
          <Tree>
            {nodes.map((n, i) => (
              <TreeRow key={i} $depth={n.depth}>
                <Expander aria-label={`${n.open ? "Collapse" : "Expand"} ${n.name}`} aria-expanded={!!n.open}>
                  <Svg size={20} box={20}>
                    {n.open
                      ? <><defs><linearGradient id="fold"><stop stopColor="#e8e8e8" /><stop offset="1" stopColor="#666" /></linearGradient></defs><path d="M2 18L18 2v16z" fill="url(#fold)" stroke="#333" strokeWidth="1.4" /></>
                      : <path d="M4 1h3l9.500 9L7 19.500H4z" fill="#e4e4e8" stroke="#444" strokeWidth="1.5" strokeLinejoin="round" />}
                  </Svg>
                </Expander>
                <Item>
                  {n.eye && <Button aria-label={`Toggle visibility of ${n.name}`}><Eye off={n.eye === "off"} /></Button>}
                  <Body $selected={n.selected}>{kindIcon[n.kind]}{n.name}</Body>
                  {n.selected && <ActiveRadio type="radio" name="active" aria-label={`Activate ${n.name}`} defaultChecked />}
                </Item>
              </TreeRow>
            ))}
          </Tree>
        </Side>
        <Side>
          <Panel>
            <Svg size={18} box={18} />
            <PanelTitle>COMMENTS</PanelTitle>
            <Button aria-label="Expand comments"><Svg size={14} box={14}><circle cx="7" cy="7" r="7" fill="#333" /><path d="M3 7h8M7 3v8" stroke="#ddd" strokeWidth="1.5" /></Svg></Button>
            <Grip />
          </Panel>
        </Side>
        <ViewCube />
        <NavBar role="toolbar" aria-label="Navigation">
          {navItems.map((n) => (
            <NavPair key={n.id} $gap={n.gap}>
              <Button aria-label={n.label}><Svg>{navIcon[n.id]}</Svg></Button>
              {n.gap && <CaretButton label={`${n.label} options`} w={9} />}
            </NavPair>
          ))}
        </NavBar>
      </Canvas>

      <Timeline>
        <Playback>
          {playback.map(([label, path]) => <Button key={label} aria-label={label}><Svg><g fill="#505050">{path}</g></Svg></Button>)}
        </Playback>
        <Track>
          <Rail width="150" height="50" viewBox="0 0 150 50">
            <path d="M2 47h120M14 38v8M49 38v8M85 38v8M121 38v8" stroke="#ccc" strokeWidth="3" fill="none" />
            <path d="M129.500 0h18v5l-7.500 8v35h-3V13l-7.500-8z" fill="#666" />
          </Rail>
          <Button aria-label="Sketch1"><SketchFeature /></Button>
          <Button aria-label="Extrude1"><ExtrudeFeature /></Button>
          <Button aria-label="Sketch2"><SketchFeature /></Button>
          <Button aria-label="Extrude2"><ExtrudeFeature /></Button>
        </Track>
        <Button aria-label="Timeline settings"><Gear fill="#999" /></Button>
      </Timeline>

      <Taskbar>
        <TaskButton $w={72} aria-label="Start"><Svg><path d="M0 3.400L10 2v9.500H0zM11 1.900L24 0v11.500H11zM0 12.500h10V22L0 20.600zM11 12.500h13V24l-13-1.900z" fill="#fff" /></Svg></TaskButton>
        <Search>
          <Svg><circle cx="15.5" cy="8.5" r="7.7" stroke="#111" strokeWidth="1.7" /><path d="M10 14L.5 23.500" stroke="#111" strokeWidth="1.7" /></Svg>
          <SearchInput placeholder="Type here to search" aria-label="Type here to search" />
        </Search>
        <TaskButton $w={72} aria-label="Task view">
          <Svg><path d="M.7 0v3.500h15V0M.7 6.700h15v10.500H.7zM.7 24v-3.500h15V24M22.500 0v5M22.500 12v12" stroke="#fff" strokeWidth="1.3" /><path d="M21 7h3v3h-3z" fill="#fff" /></Svg>
        </TaskButton>
        <Apps>
          {taskApps.map((a) => <AppButton key={a.name} $state={a.state} aria-label={a.name}>{a.icon}</AppButton>)}
        </Apps>
        <Weather>
          <Svg size={34} box={34}>
            <defs><linearGradient id="moon" x1="0" y1="0" x2="0" y2="1"><stop stopColor="#dfa24c" /><stop offset=".4" stopColor="#f2b92f" /><stop offset="1" stopColor="#ea6f1c" /></linearGradient></defs>
            <path d="M21.500 0Q33 4 33.500 15.500 32.500 33 16.500 33.500 4 33 0 21q4 1.500 8 1.200Q23 19 22.500 6z" fill="url(#moon)" />
          </Svg>
          <Conditions><span>53°F</span><span>Clear</span></Conditions>
        </Weather>
        <TaskButton $w={48} aria-label="Show hidden icons"><Svg><path d="M3 16l9-9 9 9" stroke="#fff" strokeWidth="1.5" /></Svg></TaskButton>
        <TaskButton $w={48} aria-label="Meet now"><Svg><path d="M4.500 7h10v11.500h-10zM14.500 11.500L19.500 8v9.500l-5-3.500M6 3q6-2.500 12 0M6 22.500q6 2.500 12 0" stroke="#fff" strokeWidth="1.3" /></Svg></TaskButton>
        <TaskButton $w={48} aria-label="Battery"><Svg><path d="M5 6.500h17v12H5z" stroke="#fff" strokeWidth="1.2" /><path d="M7 8.500h13.500v8H7zM22 10.500h2v4h-2z" fill="#fff" /><path d="M0 6h7v4q0 3-3.500 3T0 10z" fill="#1e2229" stroke="#fff" strokeWidth="1.2" /><path d="M2 2.500V6M5.500 2.500V6M3.500 13v5.500H5" stroke="#fff" strokeWidth="1.2" /></Svg></TaskButton>
        <TaskButton $w={48} aria-label="OneDrive">
          <Svg><circle cx="12.5" cy="9.5" r="7" fill="#8d8f92" /><circle cx="19" cy="12" r="4" fill="#77797c" /><path d="M5.500 8Q10 7 12 11l-1 8H5q-5-1-5-5.500T5.500 8z" fill="#d6d6d6" /><path d="M2 17l9-4v6H5z" fill="#fff" /><circle cx="17.5" cy="16" r="7" fill="#ffe000" /><path d="M17.500 11.500v6M17.500 18.500v2" stroke="#222" strokeWidth="1.8" /></Svg>
        </TaskButton>
        <TaskButton $w={60} aria-label="Windows Ink"><Svg><path d="M8 17L15.500 3.500q2-2 3.500 0 .5 1 0 2L11 18.500l-4 3zM8 12q-5 1-5 4.500Q3 22 7 21.500M14 13q4-4 7-3 2.500 1.500-1 4l-3-1" stroke="#fff" strokeWidth="1.4" /></Svg></TaskButton>
        <TaskButton $w={54} aria-label="Input language, English">ENG</TaskButton>
        <Clock><span>9:05 PM</span><span>4/9/2023</span></Clock>
        <TaskButton $w={60} aria-label="Action center">
          <Svg><path d="M0 0h24v19H14l-5 5v-5H0z" fill="#fff" /><path d="M5 5.500h14M5 9.500h14M5 13.500h9" stroke="#20252e" strokeWidth="1.3" /><path d="M20.500 12q4 2 3.500 6.500-2 5-7 5-3-.5-4.500-3.500 8 0 8-8z" fill="#20252e" stroke="#fff" strokeWidth="1.2" /></Svg>
        </TaskButton>
        <ShowDesktop aria-label="Show desktop" />
      </Taskbar>
    </Shell_>
  );
}
